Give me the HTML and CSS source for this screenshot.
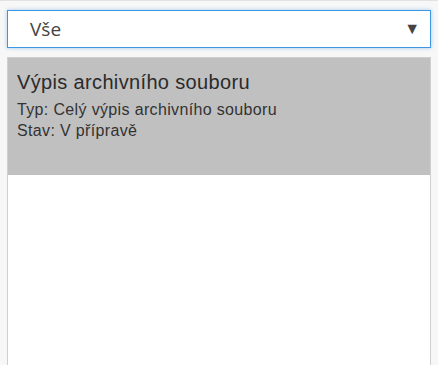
FILE: index.html
```html
<!DOCTYPE html>
<html lang="cs">
<head>
    <meta charset="UTF-8">
    <title>Výpisy</title>
    <link rel="stylesheet" href="styles.css">
</head>
<body>
    <div id="page">
        <div class="filter">
            <span class="filter-value">Vše</span>
            <span class="filter-arrow">&#9660;</span>
        </div>
        <ul class="list">
            <li class="item item-selected">
                <div class="item-title">Výpis archivního souboru</div>
                <div class="item-info">
                    <div class="item-line">Typ: Celý výpis archivního souboru</div>
                    <div class="item-line">Stav: V přípravě</div>
                </div>
            </li>
        </ul>
    </div>
</body>
</html>
```

FILE: styles.css
```css
* {
    margin: 0;
    padding: 0;
    box-sizing: border-box;
}

html,
body {
    height: 100%;
}

body {
    background: #f7f7f7;
    font-family: "Liberation Sans", Arial, sans-serif;
    color: #333;
    overflow: hidden;
}

#page {
    height: 100%;
    border-top: 1px solid #e2e2e2;
    padding: 9px 7px 0 7px;
    display: flex;
    flex-direction: column;
}

.filter {
    height: 38px;
    background: #fff;
    border: 1px solid #3d97e3;
    box-shadow: 0 0 4px rgba(61, 151, 227, 0.45);
    display: flex;
    align-items: center;
    justify-content: space-between;
    padding: 0 10px 0 16px;
}

.filter-value {
    font-family: "Open Sans", sans-serif;
    font-size: 19px;
    color: #444;
    padding-left: 6px;
}

.filter-arrow {
    font-size: 16px;
    color: #444;
}

.list {
    flex: 1;
    margin-top: 9px;
    background: #fff;
    border: 1px solid #cfcfcf;
    border-bottom: none;
    list-style: none;
}

.item {
    height: 117px;
    padding: 12px 9px;
}

.item-selected {
    background: #c0c0c0;
}

.item-title {
    font-size: 20px;
    line-height: 24px;
    letter-spacing: 0.35px;
    color: #2b2b2b;
}

.item-info {
    margin-top: 5px;
}

.item-line {
    font-size: 16px;
    line-height: 21px;
    letter-spacing: 0.35px;
    color: #333;
}
```
